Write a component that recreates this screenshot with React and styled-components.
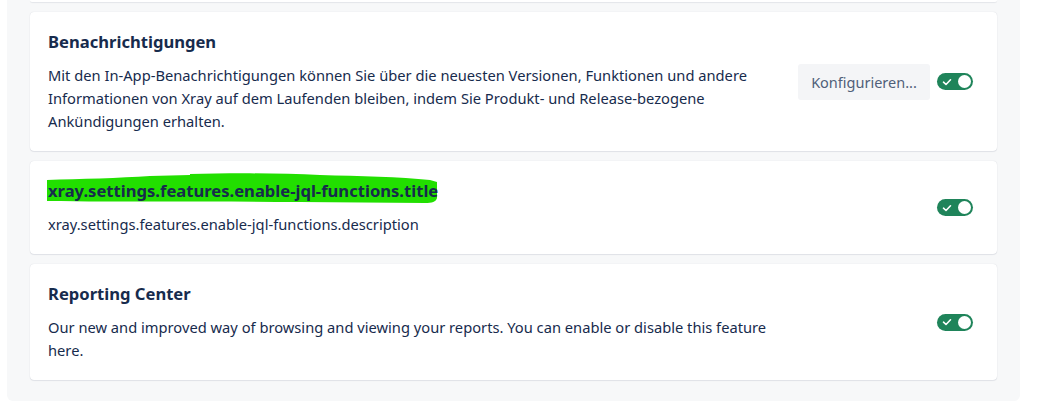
import React from 'react'
import styled, { createGlobalStyle } from 'styled-components'

const GlobalStyle = createGlobalStyle`
  body {
    margin: 0;
    background: #ffffff;
    font-family: "Noto Sans", "Open Sans", sans-serif;
    color: #172b4d;
  }
`

const features = [
  {
    title: 'Benachrichtigungen',
    description:
      'Mit den In-App-Benachrichtigungen können Sie über die neuesten Versionen, Funktionen und andere Informationen von Xray auf dem Laufenden bleiben, indem Sie Produkt- und Release-bezogene Ankündigungen erhalten.',
    action: 'Konfigurieren...',
  },
  {
    title: 'xray.settings.features.enable-jql-functions.title',
    description: 'xray.settings.features.enable-jql-functions.description',
    marked: true,
  },
  {
    title: 'Reporting Center',
    description:
      'Our new and improved way of browsing and viewing your reports. You can enable or disable this feature here.',
  },
]

function Highlight() {
  return (
    <Marker viewBox="0 0 391 32" preserveAspectRatio="none">
      <path
        d="M0,8 C33,7 73,6 103,4 L143,3 L143,2 C183,1 233,1 273,3 C313,4 353,5 383,8 L390,10 L390,26 C389,30 385,31 378,31 L253,30 C153,29 73,30 0,29 Z"
        fill="#22df00"
      />
    </Marker>
  )
}

function Toggle({ checked }) {
  return (
    <Switch checked={checked}>
      <svg width="10" height="10" viewBox="0 0 10 10">
        <path d="M1.5 5.2 L4 7.5 L8.5 2.8" fill="none" stroke="#fff" strokeWidth="1.6" strokeLinecap="round" strokeLinejoin="round" />
      </svg>
      <Knob />
    </Switch>
  )
}

function FeatureCard({ feature }) {
  return (
    <Card>
      <Body>
        <Title>
          {feature.marked && <Highlight />}
          <TitleText>{feature.title}</TitleText>
        </Title>
        <Description>{feature.description}</Description>
      </Body>
      <Actions>
        {feature.action && <Button>{feature.action}</Button>}
        <Toggle checked />
      </Actions>
    </Card>
  )
}

export default function App() {
  return (
    <>
      <GlobalStyle />
      <Panel>
        <CardStub />
        {features.map((f) => (
          <FeatureCard key={f.title} feature={f} />
        ))}
      </Panel>
    </>
  )
}

const Panel = styled.div`
  width: 1013px;
  margin-left: 7px;
  box-sizing: border-box;
  padding: 0 23px 21px;
  background: #f7f8f9;
  border-radius: 0 0 6px 6px;
  display: flex;
  flex-direction: column;
  gap: 10px;
`

const Card = styled.div`
  display: flex;
  align-items: center;
  gap: 16px;
  padding: 18px 24px 18px 18px;
  background: #ffffff;
  border-radius: 4px;
  box-shadow: 0 1px 1px rgba(9, 30, 66, 0.08), 0 0 1px rgba(9, 30, 66, 0.18);
`

const CardStub = styled.div`
  height: 2px;
  background: #ffffff;
  border-radius: 0 0 4px 4px;
  box-shadow: 0 1px 1px rgba(9, 30, 66, 0.08);
`

const Body = styled.div`
  flex: 1;
  min-width: 0;
  max-width: 745px;
`

const Title = styled.div`
  position: relative;
  font-size: 16.6px;
  font-weight: 700;
  line-height: 24px;
  margin-bottom: 10px;
  color: #172b4d;
`

const TitleText = styled.span`
  position: relative;
`

const Marker = styled.svg`
  position: absolute;
  left: -1px;
  top: -7px;
  width: 391px;
  height: 32px;
`

const Description = styled.p`
  margin: 0;
  font-size: 14.7px;
  line-height: 23px;
  color: #172b4d;
`

const Actions = styled.div`
  margin-left: auto;
  display: flex;
  align-items: center;
  gap: 7px;
`

const Button = styled.button`
  height: 36px;
  width: 132px;
  padding: 0 10px;
  border: none;
  border-radius: 3px;
  background: #f4f5f7;
  color: #505f79;
  font-family: inherit;
  font-size: 14.5px;
  white-space: nowrap;
  cursor: pointer;
`

const Switch = styled.div`
  box-sizing: border-box;
  width: 36px;
  height: 17px;
  padding: 0 2px 0 5px;
  border-radius: 9px;
  background: ${(p) => (p.checked ? '#1f845a' : '#8590a2')};
  display: flex;
  align-items: center;
  justify-content: space-between;
`

const Knob = styled.span`
  width: 13px;
  height: 13px;
  border-radius: 50%;
  background: #ffffff;
`
